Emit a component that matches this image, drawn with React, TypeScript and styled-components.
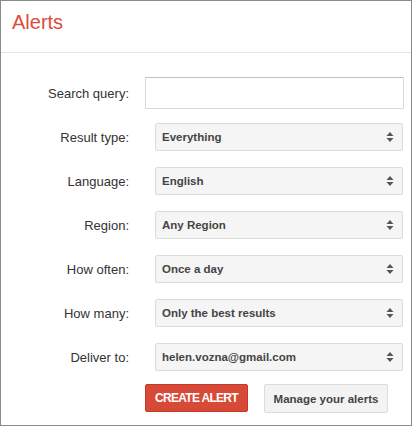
import * as React from 'react'
import styled, { createGlobalStyle } from 'styled-components'

const GlobalStyle = createGlobalStyle`
  * {
    box-sizing: border-box;
  }

  body {
    margin: 0;
    background: #ffffff;
    font-family: Arial, 'Liberation Sans', sans-serif;
  }
`

const Panel = styled.div`
  width: 412px;
  height: 426px;
  border: 1px solid #8a8a8a;
  background: #ffffff;
`

const Header = styled.header`
  height: 52px;
  padding: 10px 11px 0;
  border-bottom: 1px solid #e5e5e5;
`

const Title = styled.h1`
  margin: 0;
  font-size: 20px;
  line-height: 23px;
  font-weight: 400;
  color: #dd4b39;
`

const Form = styled.form`
  display: grid;
  grid-template-columns: 128px 1fr;
  grid-auto-rows: 44px;
  column-gap: 16px;
  align-items: center;
  padding: 18px 7px 0 0;
`

const Label = styled.label`
  text-align: right;
  font-size: 13px;
  color: #333333;
`

const TextInput = styled.input`
  height: 32px;
  width: 100%;
  border: 1px solid #d9d9d9;
  border-top-color: #c0c0c0;
  border-radius: 1px;
  background: #ffffff;
  padding: 0 8px;
  font-size: 13px;
  outline: none;
`

const SelectBox = styled.div`
  position: relative;
  display: flex;
  align-items: center;
  height: 28px;
  margin: 0 1px 0 10px;
  padding: 0 24px 0 6px;
  border: 1px solid #dcdcdc;
  border-radius: 2px;
  background: #f5f5f5;
  font-size: 11.5px;
  font-weight: 700;
  color: #444444;
`

const Arrows = styled.svg`
  position: absolute;
  right: 8px;
  top: 50%;
  margin-top: -6px;
`

const Actions = styled.div`
  grid-column: 2;
  display: flex;
  gap: 16px;
  align-self: start;
  margin-top: 5px;
`

const Button = styled.button<{ $primary?: boolean }>`
  height: ${({ $primary }) => ($primary ? '28px' : '29px')};
  border-radius: 2px;
  font-family: Arial, 'Liberation Sans', sans-serif;
  font-weight: 700;
  cursor: pointer;
  border: 1px solid ${({ $primary }) => ($primary ? '#c53727' : '#dcdcdc')};
  background: ${({ $primary }) => ($primary ? '#d74a38' : '#f3f3f3')};
  color: ${({ $primary }) => ($primary ? '#ffffff' : '#444444')};
  font-size: ${({ $primary }) => ($primary ? '12px' : '11.5px')};
  letter-spacing: ${({ $primary }) => ($primary ? '-0.7px' : '0')};
  width: ${({ $primary }) => ($primary ? '103px' : '124px')};
  padding: 0;
`

const selects: [string, string][] = [
  ['Result type:', 'Everything'],
  ['Language:', 'English'],
  ['Region:', 'Any Region'],
  ['How often:', 'Once a day'],
  ['How many:', 'Only the best results'],
  ['Deliver to:', 'helen.vozna@gmail.com'],
]

const Select = ({ value }: { value: string }) => (
  <SelectBox>
    {value}
    <Arrows width='8' height='12' viewBox='0 0 8 12'>
      <path d='M4 1 L7.5 5 L0.5 5 Z' fill='#555555' />
      <path d='M4 11 L7.5 7 L0.5 7 Z' fill='#555555' />
    </Arrows>
  </SelectBox>
)

export default function App() {
  return (
    <>
      <GlobalStyle />
      <Panel>
        <Header>
          <Title>Alerts</Title>
        </Header>
        <Form onSubmit={(e) => e.preventDefault()}>
          <Label>Search query:</Label>
          <TextInput type='text' />
          {selects.map(([label, value]) => (
            <React.Fragment key={label}>
              <Label>{label}</Label>
              <Select value={value} />
            </React.Fragment>
          ))}
          <Actions>
            <Button $primary>CREATE ALERT</Button>
            <Button type='button'>Manage your alerts</Button>
          </Actions>
        </Form>
      </Panel>
    </>
  )
}
